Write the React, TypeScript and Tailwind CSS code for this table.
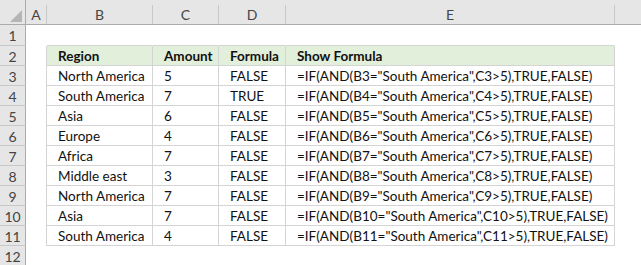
import React from 'react';

const rows: [string, string, string][] = [
  ['North America', '5', 'FALSE'],
  ['South America', '7', 'TRUE'],
  ['Asia', '6', 'FALSE'],
  ['Europe', '4', 'FALSE'],
  ['Africa', '7', 'FALSE'],
  ['Middle east', '3', 'FALSE'],
  ['North America', '7', 'FALSE'],
  ['Asia', '7', 'FALSE'],
  ['South America', '4', 'FALSE'],
];

const font = { fontFamily: 'Lato, "Liberation Sans", sans-serif' };

const ColHead: React.FC<{ label: string; w: string }> = ({ label, w }) => (
  <div className={`${w} flex shrink-0`}>
    <div className="flex-1 flex items-center justify-center text-[14px] text-[#444] pt-[5px]">{label}</div>
    <div className="w-px h-[19px] self-end bg-[#c8c8c8]"></div>
  </div>
);

const Cell: React.FC<{ w: string; line: boolean; bottom: boolean; head?: boolean; children?: React.ReactNode }> = ({
  w,
  line,
  bottom,
  head,
  children,
}) => (
  <div
    className={`${w} shrink-0 flex items-center pl-[11px] pt-[1px] border-r border-b whitespace-nowrap text-[13.5px] text-[#111] ${
      line ? 'border-r-[#d4d4d4]' : 'border-r-white'
    } ${bottom ? 'border-b-[#d4d4d4]' : 'border-b-white'} ${head ? 'bg-[#e2efda] font-bold' : ''}`}
  >
    {children}
  </div>
);

export default function App() {
  const lines = Array.from({ length: 12 }, (_, i) => i + 1);
  return (
    <div className="w-[641px] h-[265px] overflow-hidden bg-white flex flex-col" style={font}>
      <div className="h-[25px] flex shrink-0 bg-[#e6e6e6] border-b border-[#ababab]">
        <div className="w-[26px] shrink-0 flex border-r border-[#ababab]">
          <svg width="25" height="24" viewBox="0 0 25 24">
            <polygon points="10,22 22,22 22,10" fill="#b5b5b5" />
          </svg>
        </div>
        <ColHead label="A" w="w-[21px]" />
        <ColHead label="B" w="w-[106px]" />
        <ColHead label="C" w="w-[66px]" />
        <ColHead label="D" w="w-[67px]" />
        <ColHead label="E" w="w-[329px]" />
        <div className="flex-1"></div>
      </div>
      {lines.map((n) => {
        const inTable = n >= 2 && n <= 11;
        const bottom = n >= 1 && n <= 11;
        const data = n >= 3 && n <= 11 ? rows[n - 3] : null;
        return (
          <div key={n} className={`${n === 1 ? 'h-[21px]' : 'h-[20px]'} flex shrink-0`}>
            <div className="w-[26px] shrink-0 flex items-center justify-center bg-[#e6e6e6] border-r border-r-[#ababab] border-b border-b-[#c8c8c8] text-[14px] text-[#444] pt-[1px]">
              {n}
            </div>
            <div className={`w-[21px] shrink-0 border-r ${inTable ? 'border-r-[#d4d4d4]' : 'border-r-white'}`}></div>
            <Cell w="w-[106px]" line={inTable} bottom={bottom} head={n === 2}>
              {n === 2 ? 'Region' : data?.[0]}
            </Cell>
            <Cell w="w-[66px]" line={inTable} bottom={bottom} head={n === 2}>
              {n === 2 ? 'Amount' : data?.[1]}
            </Cell>
            <Cell w="w-[67px]" line={inTable} bottom={bottom} head={n === 2}>
              {n === 2 ? 'Formula' : data?.[2]}
            </Cell>
            <Cell w="w-[329px]" line={inTable} bottom={bottom} head={n === 2}>
              {n === 2 ? 'Show Formula' : data ? `=IF(AND(B${n}="South America",C${n}>5),TRUE,FALSE)` : null}
            </Cell>
            <div className="flex-1"></div>
          </div>
        );
      })}
    </div>
  );
}
